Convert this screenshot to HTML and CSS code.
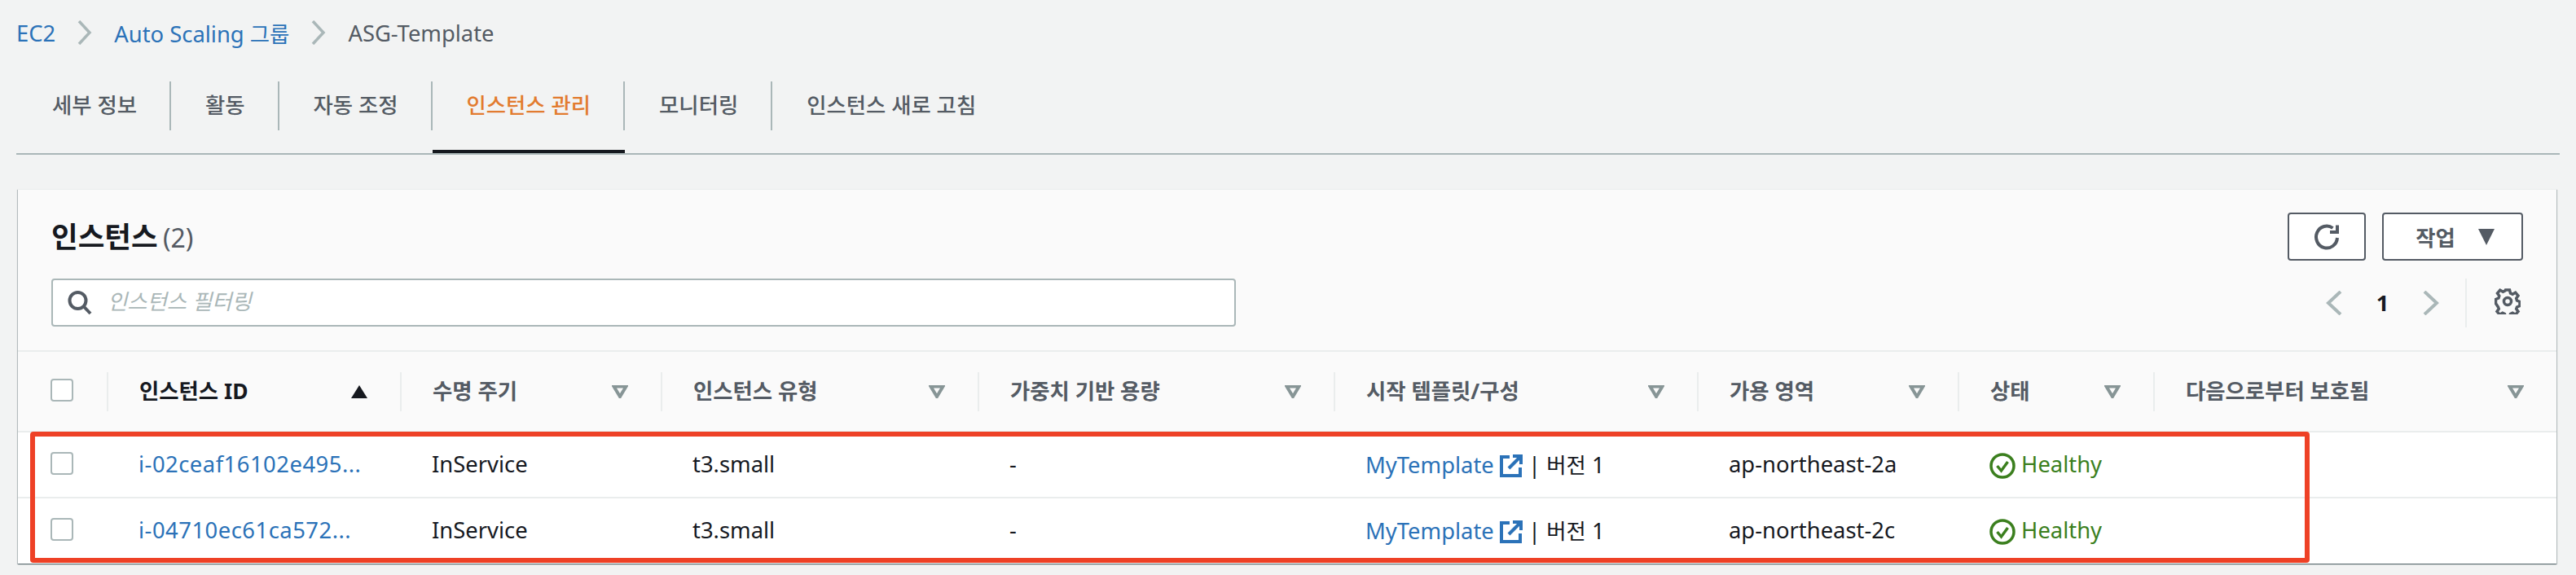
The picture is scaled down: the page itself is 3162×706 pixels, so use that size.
FILE: index.html
```html
<!DOCTYPE html>
<html lang="ko">
<head>
    <meta charset="UTF-8">
    <meta name="viewport" content="width=device-width, initial-scale=1.0">
    <title>ASG-Template</title>
    <link rel="stylesheet" href="styles.css">
</head>
<body>

<nav class="breadcrumb">
    <a href="#">EC2</a>
    <svg class="crumb-sep" viewBox="0 0 18 30"><path d="M2 1l13 14L2 29"/></svg>
    <a href="#">Auto Scaling <span class="ko">그룹</span></a>
    <svg class="crumb-sep" viewBox="0 0 18 30"><path d="M2 1l13 14L2 29"/></svg>
    <span>ASG-Template</span>
</nav>

<ul class="tabs">
    <li class="tab"><span class="tab-label">세부 정보</span></li>
    <li class="tab"><span class="tab-label">활동</span></li>
    <li class="tab"><span class="tab-label">자동 조정</span></li>
    <li class="tab active"><span class="tab-label">인스턴스 관리</span></li>
    <li class="tab"><span class="tab-label">모니터링</span></li>
    <li class="tab"><span class="tab-label last">인스턴스 새로 고침</span></li>
</ul>

<section class="card">
    <div class="card-header">
        <div class="header-row">
            <h2 class="card-title">인스턴스 <span class="count">(2)</span></h2>
            <div class="actions">
                <button class="btn btn-icon">
                    <svg class="icon-refresh" viewBox="0 0 32 32"><path d="M29 17A13 13.500 0 1 1 23.500 5"/><path d="M29 1.500V10h-9"/></svg>
                </button>
                <button class="btn btn-action">작업
                    <svg class="icon-caret" viewBox="0 0 20 20"><path d="M0 0h20L10 20z"/></svg>
                </button>
            </div>
        </div>
        <div class="header-row filter-row">
            <div class="search">
                <svg class="icon-search" viewBox="0 0 30 30"><circle cx="12.500" cy="12" r="10"/><path d="M19.500 19l8.500 9"/></svg>
                <input type="text" placeholder="인스턴스 필터링">
            </div>
            <div class="pager">
                <svg class="page-arrow" viewBox="0 0 20 30"><path d="M18 1L3 15l15 14"/></svg>
                <span class="page-num">1</span>
                <svg class="page-arrow" viewBox="0 0 20 30"><path d="M2 1l15 14L2 29"/></svg>
                <span class="pager-sep"></span>
                <svg class="icon-gear" viewBox="0 0 32 32">
                    <path d="M13.500 2h5l1 4 2.600 1.200 3.600-2 3.300 3.800-2.300 3.300.8 2.700 3.500 1.500v5l-3.500 1.500-.8 2.200 2.300 3.300-3.300 3.800-3.600-2-2.600 1.200-1 3.500h-5l-1-3.500-2.600-1.200-3.600 2-3.300-3.800 2.300-3.300-.8-2.200L1.500 18.500v-5L5 12l.8-2.700-2.300-3.300 3.300-3.800 3.600 2 2.600-1.200z"/>
                    <circle cx="16" cy="16" r="4.500"/>
                </svg>
            </div>
        </div>
    </div>

    <table class="instances">
        <colgroup>
            <col class="col-check"><col class="col-id"><col class="col-life"><col class="col-type">
            <col class="col-weight"><col class="col-tpl"><col class="col-az"><col class="col-state"><col class="col-prot">
        </colgroup>
        <thead>
            <tr>
                <th class="check-cell"><span class="checkbox"></span></th>
                <th><div class="th-inner sorted"><span>인스턴스 ID</span><svg class="sort" viewBox="0 0 20 16"><path d="M10 0l10 16H0z"/></svg></div></th>
                <th><div class="th-inner"><span>수명 주기</span><svg class="filter" viewBox="0 0 20 16"><path d="M2.500 1.500h15L10 14z"/></svg></div></th>
                <th><div class="th-inner"><span>인스턴스 유형</span><svg class="filter" viewBox="0 0 20 16"><path d="M2.500 1.500h15L10 14z"/></svg></div></th>
                <th><div class="th-inner"><span>가중치 기반 용량</span><svg class="filter" viewBox="0 0 20 16"><path d="M2.500 1.500h15L10 14z"/></svg></div></th>
                <th><div class="th-inner"><span>시작 템플릿/구성</span><svg class="filter" viewBox="0 0 20 16"><path d="M2.500 1.500h15L10 14z"/></svg></div></th>
                <th><div class="th-inner"><span>가용 영역</span><svg class="filter" viewBox="0 0 20 16"><path d="M2.500 1.500h15L10 14z"/></svg></div></th>
                <th><div class="th-inner"><span>상태</span><svg class="filter" viewBox="0 0 20 16"><path d="M2.500 1.500h15L10 14z"/></svg></div></th>
                <th><div class="th-inner"><span>다음으로부터 보호됨</span><svg class="filter" viewBox="0 0 20 16"><path d="M2.500 1.500h15L10 14z"/></svg></div></th>
            </tr>
        </thead>
        <tbody>
            <tr>
                <td class="check-cell"><span class="checkbox"></span></td>
                <td><a href="#" class="instance-id">i-02ceaf16102e495...</a></td>
                <td>InService</td>
                <td>t3.small</td>
                <td>-</td>
                <td><a href="#">MyTemplate</a>
                    <svg class="icon-ext" viewBox="0 0 28 28"><path d="M12 3H2v23h23V16"/><path d="M11 17L25 3"/><path d="M16 2h10v10"/></svg>
                    | <span class="ko">버전</span> 1</td>
                <td>ap-northeast-2a</td>
                <td class="healthy">
                    <svg class="icon-ok" viewBox="0 0 32 32"><circle cx="16" cy="16" r="14"/><path d="M9.500 16l5 6 8-11"/></svg>
                    Healthy</td>
                <td></td>
            </tr>
            <tr>
                <td class="check-cell"><span class="checkbox"></span></td>
                <td><a href="#" class="instance-id">i-04710ec61ca572...</a></td>
                <td>InService</td>
                <td>t3.small</td>
                <td>-</td>
                <td><a href="#">MyTemplate</a>
                    <svg class="icon-ext" viewBox="0 0 28 28"><path d="M12 3H2v23h23V16"/><path d="M11 17L25 3"/><path d="M16 2h10v10"/></svg>
                    | <span class="ko">버전</span> 1</td>
                <td>ap-northeast-2c</td>
                <td class="healthy">
                    <svg class="icon-ok" viewBox="0 0 32 32"><circle cx="16" cy="16" r="14"/><path d="M9.500 16l5 6 8-11"/></svg>
                    Healthy</td>
                <td></td>
            </tr>
        </tbody>
    </table>

    <div class="highlight"></div>
</section>

</body>
</html>
```

FILE: styles.css
```css
* {
    box-sizing: border-box;
}

body {
    margin: 0;
    padding: 0 20px;
    height: 706px;
    overflow: hidden;
    background-color: #f2f3f3;
    color: #16191f;
    font-family: "Noto Sans", "Noto Sans CJK KR", sans-serif;
    font-size: 27.4px;
}

a {
    color: #2b72b8;
    text-decoration: none;
}

svg {
    fill: none;
    flex: none;
}

.ko {
    font-size: 26.4px;
}

/* breadcrumb */
.breadcrumb {
    display: flex;
    align-items: center;
    gap: 27px;
    height: 80px;
    color: #545b64;
}

.crumb-sep {
    width: 18px;
    height: 30px;
    stroke: #aab7b8;
    stroke-width: 3.500;
}

/* tabs */
.tabs {
    display: flex;
    list-style: none;
    margin: 20px 0 42px;
    padding: 0 0 0 2px;
    border-bottom: 2px solid #aab7b8;
}

.tab {
    padding-bottom: 24px;
    border-bottom: 4px solid transparent;
    font-size: 26.4px;
    font-weight: 500;
    color: #545b64;
}

.tab-label {
    display: block;
    height: 60px;
    line-height: 58px;
    padding: 0 40px 0 42px;
    border-right: 2px solid #aab7b8;
    white-space: nowrap;
}

.tab-label.last {
    border-right: 0;
}

.tab.active {
    color: #e27b2f;
    border-bottom-color: #16191f;
}

/* card */
.card {
    position: relative;
    margin: 0 4px 0 2px;
    background: #fff;
    border-top: 1px solid #eaeded;
    box-shadow: 0 1px 1px rgba(0, 28, 36, .4), 1px 1px 1px rgba(0, 28, 36, .2), -1px 1px 1px rgba(0, 28, 36, .2);
}

.card-header {
    height: 199px;
    padding: 28px 41px 0 41px;
    background: #fafafa;
    border-bottom: 2px solid #eaeded;
}

.header-row {
    display: flex;
    justify-content: space-between;
    align-items: center;
    height: 59px;
}

.filter-row {
    margin-top: 22px;
}

.card-title {
    margin: -5px 0 0;
    font-size: 35.500px;
    font-weight: 700;
    word-spacing: -3px;
}

.count {
    font-size: 32px;
    font-weight: 400;
    color: #545b64;
}

.actions {
    display: flex;
    gap: 20px;
}

.btn {
    display: flex;
    align-items: center;
    justify-content: center;
    height: 59px;
    background: #fff;
    border: 2px solid #545b64;
    border-radius: 4px;
    color: #545b64;
    font-family: inherit;
    font-size: 26.4px;
    font-weight: 700;
    padding: 0;
}

.btn-icon {
    width: 96px;
}

.btn-action {
    width: 173px;
    gap: 28px;
    padding-left: 6px;
}

.icon-refresh {
    width: 32px;
    height: 32px;
    stroke: #545b64;
    stroke-width: 4;
}

.icon-caret {
    width: 20px;
    height: 20px;
    fill: #545b64;
}

.search {
    display: flex;
    align-items: center;
    width: 1454px;
    height: 59px;
    background: #fff;
    border: 2px solid #aab7b8;
    border-radius: 4px;
    padding-left: 18px;
    gap: 19px;
}

.icon-search {
    width: 30px;
    height: 30px;
    stroke: #545b64;
    stroke-width: 4;
}

.search input {
    flex: 1;
    border: 0;
    outline: 0;
    padding: 0 0 4px;
    background: transparent;
    font-family: inherit;
    font-size: 26.4px;
    font-style: italic;
}

.search input::placeholder {
    color: #aab7b8;
    opacity: 1;
}

.pager {
    display: flex;
    align-items: center;
    margin-right: 3px;
}

.page-arrow {
    width: 20px;
    height: 30px;
    stroke: #aab7b8;
    stroke-width: 4;
}

.page-num {
    width: 99px;
    text-align: center;
    font-weight: 700;
}

.pager-sep {
    width: 2px;
    height: 60px;
    margin: 0 34px 0 32px;
    background: #eaeded;
}

.icon-gear {
    width: 32px;
    height: 32px;
    margin-top: -3px;
    stroke: #545b64;
    stroke-width: 3.500;
}

/* table */
.instances {
    width: 100%;
    table-layout: fixed;
    border-collapse: collapse;
}

.col-check { width: 109px; }
.col-id { width: 360px; }
.col-life { width: 320px; }
.col-type { width: 389px; }
.col-weight { width: 437px; }
.col-tpl { width: 446px; }
.col-az { width: 320px; }
.col-state { width: 240px; }

.instances th {
    height: 98px;
    padding: 0;
    background: #fafafa;
    border-bottom: 2px solid #eaeded;
    color: #545b64;
    font-size: 26.4px;
    font-weight: 700;
    text-align: left;
}

.th-inner {
    display: flex;
    align-items: center;
    justify-content: space-between;
    height: 48px;
    padding: 0 40px 0 38px;
    border-left: 2px solid #eaeded;
    white-space: nowrap;
}

.th-inner span {
    margin-top: -4px;
}

.th-inner.sorted {
    color: #16191f;
}

.sort {
    width: 20px;
    height: 16px;
    fill: #16191f;
}

.filter {
    width: 20px;
    height: 16px;
    stroke: #879596;
    stroke-width: 4;
}

.instances td {
    height: 81px;
    padding: 0 0 3px 39px;
    background: #fff;
    border-bottom: 2px solid #eaeded;
    white-space: nowrap;
}

.instances tr:last-child td {
    border-bottom: 0;
}

.instances .check-cell {
    padding: 0 0 4px 40px;
}

.instance-id {
    letter-spacing: .5px;
}

.checkbox {
    display: block;
    width: 28px;
    height: 28px;
    background: #fff;
    border: 2px solid #aab7b8;
    border-radius: 4px;
}

.icon-ext {
    width: 28px;
    height: 28px;
    vertical-align: -5px;
    stroke: #2b72b8;
    stroke-width: 4;
}

.healthy {
    color: #3b7f1e;
}

.icon-ok {
    width: 32px;
    height: 32px;
    vertical-align: -8px;
    stroke: #3b7f1e;
    stroke-width: 3.500;
}

/* annotation drawn over the two rows */
.highlight {
    position: absolute;
    left: 15px;
    top: 297px;
    width: 2798px;
    height: 161px;
    border: 6px solid #ee4126;
    border-radius: 4px;
}
```
